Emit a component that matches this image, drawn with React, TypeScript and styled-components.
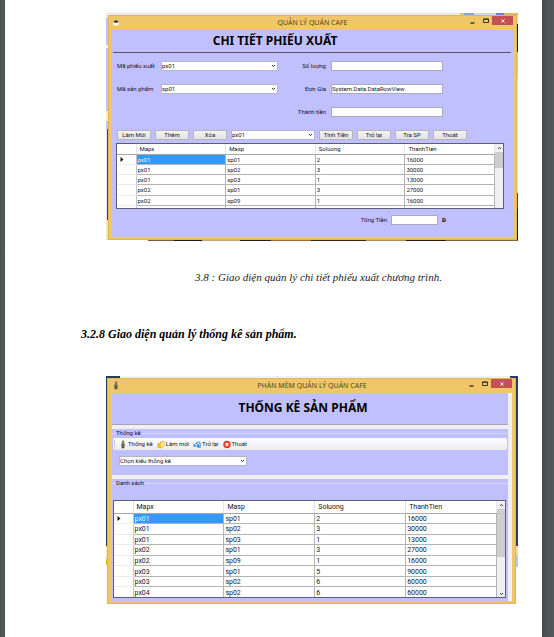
import React from 'react';
import styled, { createGlobalStyle, css } from 'styled-components';

const GlobalStyle = createGlobalStyle`
  *, *::before, *::after { box-sizing: border-box; }
  body {
    margin: 0;
    background: #515659;
    font-family: Roboto, 'Noto Sans', sans-serif;
    color: #14142a;
  }
  button, input, select { font: inherit; color: inherit; margin: 0; }
`;

const Viewer = styled.div`
  min-height: 100vh;
  padding: 0 12px 0 5px;
  background: linear-gradient(90deg, #4b5053 0, #565b5e 4px, #3f4446 5px, #3f4446 calc(100% - 12px), #4d5255 calc(100% - 9px), #54595c 100%);
`;

const Paper = styled.main`
  min-height: 100vh;
  padding: 13px 24px 0 76px;
  background: #fff;
`;

const Figure = styled.figure`
  margin: 0;
`;

const Backdrop = styled.div<{ $kind: 'detail' | 'stats' }>`
  margin-left: 25px;
  ${({ $kind }) =>
    $kind === 'detail'
      ? css`
          padding: 2px 1px 1px 2px;
          background:
            linear-gradient(90deg, #e8e8ea 0 354px, #d9c67c 354px 358px, #7fa4e0 358px 368px, #cfd6e4 368px 390px, #5f88d8 390px 398px, #d9b95c 398px) top / 100% 2px no-repeat,
            linear-gradient(90deg, #fff 0 42px, #7a5a48 42px 68px, #1b1a2c 68px 96px, #c9a17c 96px 134px, #2c1d1b 134px 165px, #9c6a3c 165px 205px, #3a2318 205px 260px, #b08a58 260px 300px, #2d1a12 300px 340px, #84603a 340px) bottom / 100% 1px no-repeat,
            linear-gradient(180deg, #d8d8dc 0 11px, #1d1f24 11px 39px, #c9ccd2 39px 64px, #e0e0e4 64px 180px, #3c5a2c 180px 196px, #1d1a1c 196px) right / 1px 100% no-repeat,
            linear-gradient(180deg, #e8e8ea 0 5px, #c0c0fe 5px 32px, #fff 32px 35px, #c0c0fe 35px 98px, #f3f0b4 98px 108px, #c0c0fe 108px 116px, #e4e4ee 116px 207px, #efe6b6 207px) left / 1px 100% no-repeat,
            linear-gradient(180deg, #e8e8ea 0 5px, #c0c0fe 5px 32px, #fff 32px 35px, #c0c0fe 35px 98px, #f3f0b4 98px 108px, #c0c0fe 108px 116px, #3b4266 116px 207px, #efe6b6 207px) left / 2px 100% no-repeat;
        `
      : css`
          padding: 2px 2px 0 1px;
          background:
            linear-gradient(90deg, #2b3d5f 0 14px, #f1f1f3 14px calc(100% - 8px), #2b3d5f calc(100% - 8px)) top / 100% 2px no-repeat,
            linear-gradient(180deg, #2b3d5f 0 170px, #f6dd94 170px 179px, #b9c6dc 179px 191px, #fff 191px) right / 2px 100% no-repeat,
            linear-gradient(180deg, #2b3d5f 0 170px, #f5eeb8 170px 183px, #dfb820 183px 189px, #fff 189px) left / 1px 100% no-repeat;
        `}
`;

const Window = styled.section<{ $light?: boolean }>`
  padding: 0 4px 3px ${({ $light }) => ($light ? '5px' : '4px')};
  background: #efc768;
  box-shadow: inset 0 0 0 1px #e0b659;
`;

const TitleBar = styled.header`
  display: grid;
  grid-template-columns: 72px 1fr 72px;
  height: 15px;
  align-items: center;
`;

const AppIcon = styled.svg`
  display: block;
  width: 8px;
  height: 9px;
`;

const WindowTitle = styled.div`
  font-family: 'Noto Sans', sans-serif;
  font-size: 7px;
  line-height: 14px;
  text-align: center;
  color: #54461f;
  white-space: nowrap;
`;

const WindowButtons = styled.div`
  display: flex;
  align-self: start;
  justify-content: flex-end;
  padding-top: 1px;
`;

const WindowButton = styled.button<{ $close?: boolean }>`
  width: ${({ $close }) => ($close ? '21px' : '13px')};
  height: 9px;
  padding: 0;
  border: 0;
  background: ${({ $close }) => ($close ? '#c75050' : 'transparent')};
  svg { display: block; margin: auto; }
`;

const Client = styled.div`
  background: #c0c0fe;
`;

const Banner = styled.h1`
  margin: 0 2px 0 1px;
  height: 23px;
  padding-right: 74px;
  border-bottom: 1px solid #55556b;
  font-family: 'Noto Sans', sans-serif;
  font-size: 12px;
  line-height: 22px;
  font-weight: 700;
  text-align: center;
  color: #000;
  white-space: nowrap;
`;

const DetailForm = styled.form`
  display: grid;
  grid-template-columns: 45px 117fr 53px 112fr 66px;
  grid-auto-rows: 10px;
  row-gap: 13px;
  align-items: center;
  padding: 8px 4px 0 4px;
`;

const FieldLabel = styled.label<{ $right?: boolean }>`
  grid-column: ${({ $right }) => ($right ? 3 : 1)};
  padding: 0 5px 0 1px;
  font-size: 6px;
  line-height: 10px;
  text-align: ${({ $right }) => ($right ? 'right' : 'left')};
  white-space: nowrap;
`;

const TextBox = styled.input`
  display: block;
  width: 100%;
  min-width: 0;
  height: 10px;
  padding: 0 0 1px;
  border: 1px solid #a9a9c4;
  border-radius: 0;
  background: #fff;
  font-size: 6px;
  line-height: 7px;
`;

const ComboFrame = styled.div<{ $wide?: boolean }>`
  position: relative;
  min-width: 0;
  width: ${({ $wide }) => ($wide ? '128px' : 'auto')};
  svg {
    position: absolute;
    right: 2px;
    top: 3px;
    pointer-events: none;
  }
`;

const ComboSelect = styled.select`
  appearance: none;
  display: block;
  width: 100%;
  height: 10px;
  padding: 0 8px 0 0;
  border: 1px solid #b4b4cc;
  border-radius: 0;
  background: #fff;
  font-size: 6px;
  line-height: 8px;
`;

const ActionRow = styled.div`
  display: grid;
  grid-template-columns: repeat(3, 34fr) 84fr repeat(4, 34fr);
  column-gap: 4px;
  padding: 13px 46px 0 5px;
`;

const ActionButton = styled.button`
  min-width: 0;
  height: 10px;
  padding: 0;
  border: 1px solid #b5b5bd;
  background: linear-gradient(#f3f3f3, #e2e2e4);
  font-size: 6px;
  line-height: 8px;
  white-space: nowrap;
`;

const GridFrame = styled.div<{ $kind: 'detail' | 'stats' }>`
  display: grid;
  grid-template-columns: 1fr 8px;
  overflow: hidden;
  border: 1px solid #5c5c74;
  background: #fff;
  margin: ${({ $kind }) => ($kind === 'detail' ? '3px 9px 0 4px' : '0 2px 0 1px')};
  height: ${({ $kind }) => ($kind === 'detail' ? '66px' : '98px')};
`;

const DataTable = styled.table<{ $kind: 'detail' | 'stats' }>`
  align-self: start;
  width: 100%;
  table-layout: fixed;
  border-collapse: collapse;
  font-size: ${({ $kind }) => ($kind === 'detail' ? '6px' : '7px')};
  line-height: 8px;
  height: ${({ $kind }) => ($kind === 'detail' ? '72px' : '97px')};
  tr { height: 10px; }
  thead tr { height: ${({ $kind }) => ($kind === 'detail' ? '10px' : '12px')}; }
`;

const HeadCell = styled.th`
  padding: 1px 0 0 3px;
  border-right: 1px solid #e6e6ea;
  border-bottom: 1px solid #a8a8a8;
  font-weight: 400;
  text-align: left;
  &:first-child { width: 19px; }
`;

const Cell = styled.td<{ $selected?: boolean }>`
  padding: 1px 0 0 1px;
  border-right: 1px solid #b4b4b4;
  border-bottom: 1px solid #b4b4b4;
  background: ${({ $selected }) => ($selected ? '#3399ff' : '#fff')};
  color: ${({ $selected }) => ($selected ? '#e6f2ff' : 'inherit')};
`;

const MarkerCell = styled.td`
  padding: 0 0 0 3px;
  border-right: 1px solid #c4c4cc;
  border-bottom: 1px solid #ececf2;
  svg { display: block; }
`;

const ScrollTrack = styled.div`
  display: flex;
  flex-direction: column;
  background: #f0f0f0;
`;

const ScrollArrow = styled.button`
  display: block;
  width: 100%;
  height: 8px;
  padding: 0;
  border: 0;
  background: none;
  svg { display: block; margin: auto; }
`;

const ScrollThumb = styled.div<{ $length: number }>`
  height: ${({ $length }) => $length}px;
  margin-bottom: auto;
  background: #cdcdcd;
`;

const TotalRow = styled.div`
  display: flex;
  align-items: center;
  justify-content: flex-end;
  gap: 4px;
  height: 28px;
  padding: 0 67px 7px 0;
  font-size: 6px;
`;

const TotalBox = styled.div`
  width: 47px;
`;

const Currency = styled.strong`
  color: #111122;
`;

const Caption = styled.figcaption`
  padding: 28px 0 0 38px;
  font-family: 'Liberation Serif', serif;
  font-size: 11px;
  line-height: 16px;
  font-style: italic;
  text-align: center;
  color: #222;
`;

const SectionTitle = styled.h2`
  margin: 41px 0 34px;
  font-family: 'Liberation Serif', serif;
  font-size: 12px;
  line-height: 16px;
  font-weight: 700;
  font-style: italic;
  color: #000;
`;

const StatsClient = styled.div`
  display: flex;
  flex-direction: column;
  gap: 4px;
  padding: 0 4px 0 0;
  background: #efeff4;
`;

const StatsBanner = styled.h1`
  margin: 0;
  height: 32px;
  padding-right: 14px;
  background: #c0c0fe;
  border-bottom: 1px solid #a6a6ae;
  font-family: 'Noto Sans', sans-serif;
  font-size: 12px;
  line-height: 30px;
  font-weight: 700;
  text-align: center;
  color: #000;
`;

const Group = styled.section<{ $filter?: boolean }>`
  background: #c0c0fe;
  height: ${({ $filter }) => ($filter ? '46px' : 'auto')};
  padding-bottom: ${({ $filter }) => ($filter ? '0' : '3px')};
`;

const GroupTitle = styled.h3<{ $tall?: boolean }>`
  margin: 0;
  height: ${({ $tall }) => ($tall ? '21px' : '9px')};
  padding-left: 4px;
  background: linear-gradient(#d8d8fc, #d8d8fc) 0 4px / 100% 1px no-repeat;
  font-size: 6px;
  line-height: 8px;
  font-weight: 400;
  span { background: #c0c0fe; }
`;

const ToolStrip = styled.div`
  display: flex;
  align-items: center;
  gap: 4px;
  height: 12px;
  margin: 0 1px;
  padding-left: 1px;
  border-radius: 2px;
  background: linear-gradient(#fdfdfd, #ececef);
`;

const Grip = styled.span`
  width: 1px;
  height: 8px;
  background: repeating-linear-gradient(#a8a8b4 0 1px, transparent 1px 2px);
`;

const ToolButton = styled.button`
  display: flex;
  align-items: center;
  gap: 1px;
  padding: 0;
  border: 0;
  background: none;
  font-size: 6px;
  line-height: 10px;
  white-space: nowrap;
`;

const FilterArea = styled.div`
  padding: 6px 0 0 7px;
`;

const Chevron = () => (
  <svg width="5" height="4" viewBox="0 0 5 4" aria-hidden="true">
    <path d="M1 1l1.5 1.6L4 1" fill="none" stroke="#333" strokeWidth="1" />
  </svg>
);

const CupIcon = () => (
  <AppIcon viewBox="0 0 9 9" aria-hidden="true">
    <ellipse cx="4.5" cy="6.2" rx="3.6" ry="1.8" fill="#f7f4ee" />
    <path d="M2.2 3.5h4.6l-.5 3H2.8z" fill="#fff" />
    <ellipse cx="4.5" cy="3.6" rx="2.4" ry="1.3" fill="#20242c" />
  </AppIcon>
);

const PersonIcon = () => (
  <AppIcon viewBox="0 0 9 9" aria-hidden="true">
    <circle cx="4.6" cy="1.5" r="1.4" fill="#8a6a3c" />
    <path d="M2.6 3h3.8l-.2 3.2H2.8z" fill="#4d6266" />
    <path d="M3 5.5h1.4v3.3H3zM4.7 5.5h1.4v3.3H4.7z" fill="#3c4244" />
    <path d="M5.2 2.8l1.1.3v3h-1.1z" fill="#b88b3c" />
  </AppIcon>
);

const FolderIcon = () => (
  <AppIcon viewBox="0 0 9 9" aria-hidden="true">
    <path d="M.8 3.6l3-.8V1.6L8 .8v5L4.8 8.4.8 7.8z" fill="#eec02a" stroke="#c89a18" strokeWidth=".5" />
    <path d="M4 3l3.8-1.8v4.4L4.6 8z" fill="#fbe98a" />
  </AppIcon>
);

const BackIcon = () => (
  <AppIcon viewBox="0 0 9 9" aria-hidden="true">
    <path d="M3.8 3.4C4.6 1.4 8 .8 8 3.4v4.2H6.2V3.8" fill="none" stroke="#3487d8" strokeWidth="1.2" />
    <path d="M2 4.2C3 3 5 3.4 5 5v2.6" fill="none" stroke="#2a6fc4" strokeWidth="1" />
    <path d="M.6 3v4h3.8z" fill="#3487d8" />
  </AppIcon>
);

const ExitIcon = () => (
  <AppIcon viewBox="0 0 9 9" aria-hidden="true">
    <circle cx="4.5" cy="4.5" r="4.2" fill="#e2412a" />
    <path d="M3 3l3 3M6 3L3 6" stroke="#fff" strokeWidth="1.4" />
  </AppIcon>
);

const Caret = () => (
  <svg width="4" height="5" viewBox="0 0 4 5" aria-hidden="true">
    <path d="M.5 0L3.5 2.5.5 5z" fill="#111" />
  </svg>
);

function Controls() {
  return (
    <WindowButtons>
      <WindowButton type="button" aria-label="Minimize">
        <svg width="5" height="6" viewBox="0 0 5 6"><path d="M.5 5h4" stroke="#3b3218" strokeWidth="1.4" /></svg>
      </WindowButton>
      <WindowButton type="button" aria-label="Maximize">
        <svg width="6" height="5" viewBox="0 0 6 5"><path d="M.5 1h5v3.5h-5zM.5 1.2h5" fill="none" stroke="#3b3218" strokeWidth="1" /></svg>
      </WindowButton>
      <WindowButton type="button" aria-label="Close" $close>
        <svg width="4" height="4" viewBox="0 0 4 4"><path d="M.5.5l3 3M3.5.5l-3 3" stroke="#fff" strokeWidth="1" /></svg>
      </WindowButton>
    </WindowButtons>
  );
}

type ComboProps = { id?: string; label?: string; value: string; options?: string[]; wide?: boolean };

function Combo({ id, label, value, options = [], wide }: ComboProps) {
  return (
    <ComboFrame $wide={wide}>
      <ComboSelect id={id} aria-label={label} defaultValue={value}>
        {[value, ...options].map((o) => <option key={o}>{o}</option>)}
      </ComboSelect>
      <Chevron />
    </ComboFrame>
  );
}

const columns = ['Mapx', 'Masp', 'Soluong', 'ThanhTien'];

const orders = [
  ['px01', 'sp01', '2', '16000'],
  ['px01', 'sp02', '3', '30000'],
  ['px01', 'sp03', '1', '13000'],
  ['px02', 'sp01', '3', '27000'],
  ['px02', 'sp09', '1', '16000'],
  ['px03', 'sp01', '5', '90000'],
  ['px03', 'sp02', '6', '60000'],
  ['px04', 'sp02', '6', '60000'],
];

function OrderGrid({ kind }: { kind: 'detail' | 'stats' }) {
  const rows: string[][] = kind === 'detail' ? [...orders.slice(0, 5), ['', '', '', '']] : orders;
  return (
    <GridFrame $kind={kind}>
      <DataTable $kind={kind}>
        <thead>
          <tr>
            <HeadCell aria-label="Row" />
            {columns.map((c) => <HeadCell key={c} scope="col">{c}</HeadCell>)}
          </tr>
        </thead>
        <tbody>
          {rows.map((row, r) => (
            <tr key={r}>
              <MarkerCell>{r === 0 && <Caret />}</MarkerCell>
              {row.map((v, c) => <Cell key={c} $selected={r === 0 && c === 0}>{v}</Cell>)}
            </tr>
          ))}
        </tbody>
      </DataTable>
      <ScrollTrack>
        <ScrollArrow type="button" aria-label="Scroll up">
          <svg width="5" height="4" viewBox="0 0 5 4"><path d="M1 3l1.5-1.6L4 3" fill="none" stroke="#444" /></svg>
        </ScrollArrow>
        <ScrollThumb $length={kind === 'detail' ? 16 : 48} />
        <ScrollArrow type="button" aria-label="Scroll down"><Chevron /></ScrollArrow>
      </ScrollTrack>
    </GridFrame>
  );
}

function DetailWindow() {
  return (
    <Window>
      <TitleBar>
        <CupIcon />
        <WindowTitle>QUẢN LÝ QUÁN CAFE</WindowTitle>
        <Controls />
      </TitleBar>
      <Client>
        <Banner>CHI TIẾT PHIẾU XUẤT</Banner>
        <DetailForm>
          <FieldLabel htmlFor="receipt">Mã phiếu xuất</FieldLabel>
          <Combo id="receipt" value="px01" options={['px02']} />
          <FieldLabel htmlFor="quantity" $right>Số lượng</FieldLabel>
          <TextBox id="quantity" />
          <FieldLabel htmlFor="product">Mã sản phẩm</FieldLabel>
          <Combo id="product" value="sp01" options={['sp02']} />
          <FieldLabel htmlFor="price" $right>Đơn Gía</FieldLabel>
          <TextBox id="price" defaultValue="System.Data.DataRowView" />
          <FieldLabel htmlFor="amount" $right>Thành tiền</FieldLabel>
          <TextBox id="amount" />
        </DetailForm>
        <ActionRow>
          <ActionButton type="button">Làm Mới</ActionButton>
          <ActionButton type="button">Thêm</ActionButton>
          <ActionButton type="button">Xóa</ActionButton>
          <Combo label="Phiếu xuất" value="px01" options={['px02']} />
          <ActionButton type="button">Tính Tiền</ActionButton>
          <ActionButton type="button">Trở lại</ActionButton>
          <ActionButton type="button">Tra SP</ActionButton>
          <ActionButton type="button">Thoát</ActionButton>
        </ActionRow>
        <OrderGrid kind="detail" />
        <TotalRow>
          <label htmlFor="total">Tổng Tiền</label>
          <TotalBox><TextBox id="total" /></TotalBox>
          <Currency>Đ</Currency>
        </TotalRow>
      </Client>
    </Window>
  );
}

function StatsWindow() {
  return (
    <Window $light>
      <TitleBar>
        <PersonIcon />
        <WindowTitle>PHẦN MỀM QUẢN LÝ QUÁN CAFE</WindowTitle>
        <Controls />
      </TitleBar>
      <StatsClient>
        <StatsBanner>THỐNG KÊ SẢN PHẨM</StatsBanner>
        <Group $filter>
          <GroupTitle><span>Thống kê</span></GroupTitle>
          <ToolStrip>
            <Grip />
            <ToolButton type="button"><PersonIcon />Thống kê</ToolButton>
            <ToolButton type="button"><FolderIcon />Làm mới</ToolButton>
            <ToolButton type="button"><BackIcon />Trở lại</ToolButton>
            <ToolButton type="button"><ExitIcon />Thoát</ToolButton>
          </ToolStrip>
          <FilterArea>
            <Combo label="Kiểu thống kê" value="Chọn kiểu thống kê" wide />
          </FilterArea>
        </Group>
        <Group>
          <GroupTitle $tall><span>Danh sách</span></GroupTitle>
          <OrderGrid kind="stats" />
        </Group>
      </StatsClient>
    </Window>
  );
}

export default function App() {
  return (
    <>
      <GlobalStyle />
      <Viewer>
        <Paper>
          <Figure>
            <Backdrop $kind="detail"><DetailWindow /></Backdrop>
            <Caption>3.8 : Giao diện quản lý chi tiết phiếu xuất chương trình.</Caption>
          </Figure>
          <SectionTitle>3.2.8 Giao diện quản lý thống kê sản phẩm.</SectionTitle>
          <Figure>
            <Backdrop $kind="stats"><StatsWindow /></Backdrop>
          </Figure>
        </Paper>
      </Viewer>
    </>
  );
}
